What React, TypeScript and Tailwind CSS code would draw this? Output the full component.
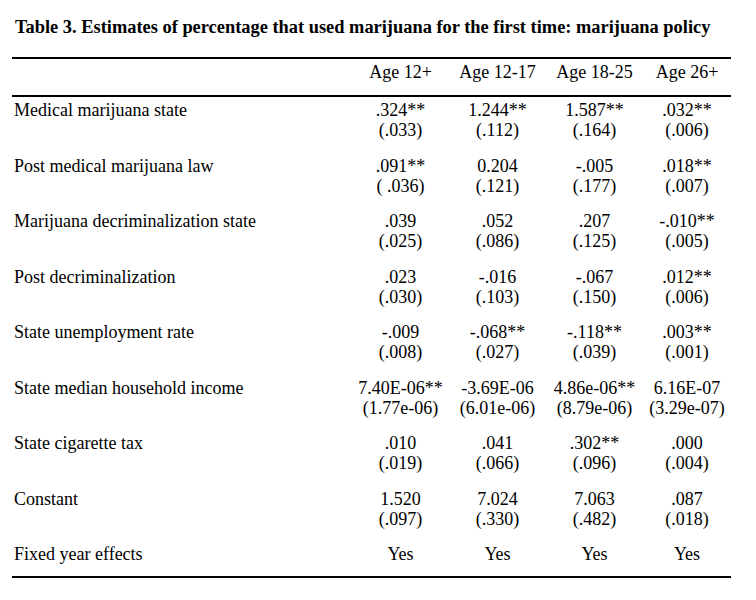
const rows: { label: string; vals: string[]; ses?: string[] }[] = [
  { label: 'Medical marijuana state', vals: ['.324**', '1.244**', '1.587**', '.032**'], ses: ['(.033)', '(.112)', '(.164)', '(.006)'] },
  { label: 'Post medical marijuana law', vals: ['.091**', '0.204', '-.005', '.018**'], ses: ['( .036)', '(.121)', '(.177)', '(.007)'] },
  { label: 'Marijuana decriminalization state', vals: ['.039', '.052', '.207', '-.010**'], ses: ['(.025)', '(.086)', '(.125)', '(.005)'] },
  { label: 'Post decriminalization', vals: ['.023', '-.016', '-.067', '.012**'], ses: ['(.030)', '(.103)', '(.150)', '(.006)'] },
  { label: 'State unemployment rate', vals: ['-.009', '-.068**', '-.118**', '.003**'], ses: ['(.008)', '(.027)', '(.039)', '(.001)'] },
  { label: 'State median household income', vals: ['7.40E-06**', '-3.69E-06', '4.86e-06**', '6.16E-07'], ses: ['(1.77e-06)', '(6.01e-06)', '(8.79e-06)', '(3.29e-07)'] },
  { label: 'State cigarette tax', vals: ['.010', '.041', '.302**', '.000'], ses: ['(.019)', '(.066)', '(.096)', '(.004)'] },
  { label: 'Constant', vals: ['1.520', '7.024', '7.063', '.087'], ses: ['(.097)', '(.330)', '(.482)', '(.018)'] },
];

const grid = 'grid grid-cols-[340px_97px_97px_97px_88px]';

export default function App() {
  return (
    <div className="w-[756px] h-[600px] bg-white text-black font-['Liberation_Serif',serif]">
      {/* Title */}
      <h1 className="pl-[15px] pt-[17px] text-[18.4px] leading-[20px] font-bold whitespace-nowrap">
        Table 3. Estimates of percentage that used marijuana for the first time: marijuana policy
      </h1>

      <div className="ml-[12px] w-[719px] mt-[20px] text-[18px] leading-[20px]">
        {/* Header */}
        <div className="border-t-2 border-b-2 border-black pt-[3px] pb-[13px]">
          <div className={grid}>
            <div />
            <div className="text-center">Age 12+</div>
            <div className="text-center">Age 12-17</div>
            <div className="text-center">Age 18-25</div>
            <div className="text-center">Age 26+</div>
          </div>
        </div>

        {/* Body */}
        <div className="border-b-2 border-black pt-[3px] pb-[12px]">
          {rows.map((r) => (
            <div key={r.label} className={`${grid} pb-[15.5px]`}>
              <div className="pl-[2px]">{r.label}</div>
              {r.vals.map((v, i) => (
                <div key={i} className="text-center whitespace-nowrap">
                  <div>{v}</div>
                  <div>{r.ses?.[i]}</div>
                </div>
              ))}
            </div>
          ))}
          <div className={grid}>
            <div className="pl-[2px]">Fixed year effects</div>
            <div className="text-center">Yes</div>
            <div className="text-center">Yes</div>
            <div className="text-center">Yes</div>
            <div className="text-center">Yes</div>
          </div>
        </div>
      </div>
    </div>
  );
}
